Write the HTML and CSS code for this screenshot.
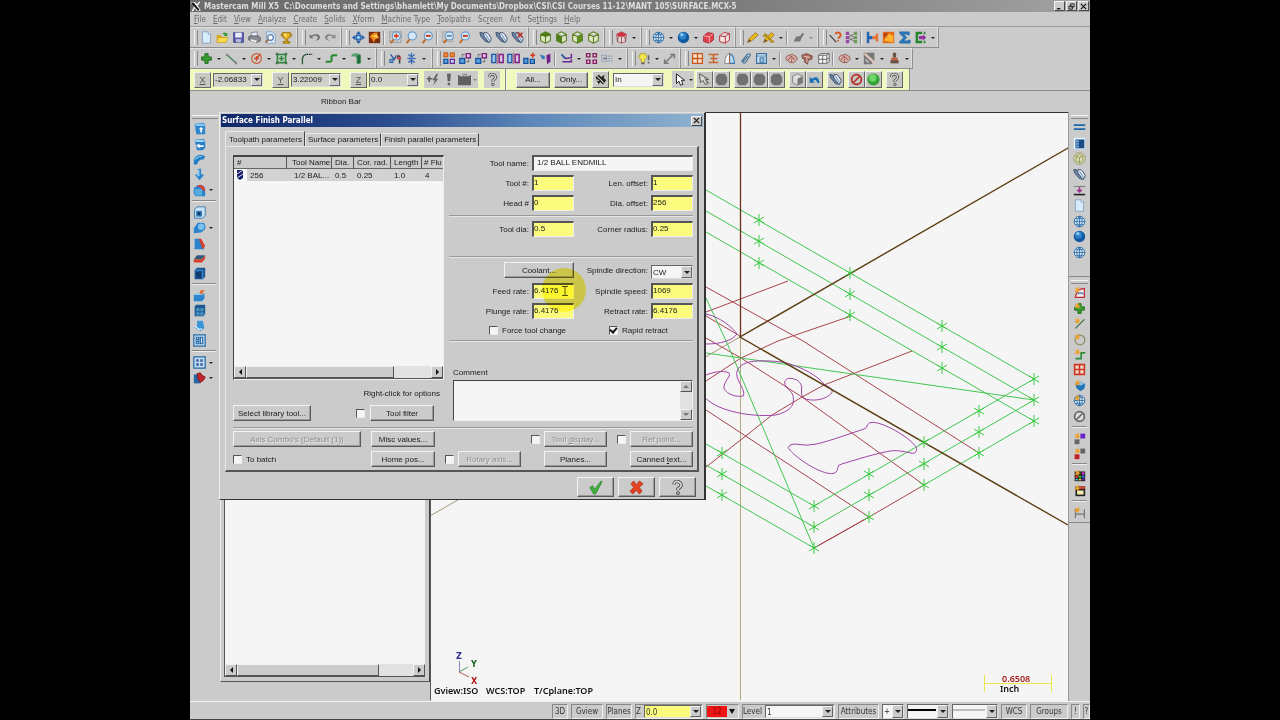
FILE: index.html
```html
<!DOCTYPE html>
<html lang="en">
<head>
<meta charset="utf-8">
<title>Mastercam Mill X5</title>
<link rel="stylesheet" href="styles.css">
</head>
<body>
<svg class="defs" aria-hidden="true">
<symbol id="new" viewBox="0 0 16 16"><path d="M3 1h7l3 3v11H3z" fill="#d9ecfb" stroke="#7d9cc0"/><path d="M10 1v3h3" fill="#fff" stroke="#7d9cc0"/></symbol>
<symbol id="open" viewBox="0 0 16 16"><path d="M1 5h5l1 2h6v7H1z" fill="#d9a818"/><path d="M3 8h12l-3 6H1z" fill="#f7dc4c" stroke="#b88f16" stroke-width=".6"/><path d="M7 4q3-4 6-1l1-1v4h-4l1-1q-2-2-4-1z" fill="#2f9a35"/></symbol>
<symbol id="save" viewBox="0 0 16 16"><path d="M2 2h12v12H2z" fill="#5d5fb5" stroke="#3a3c86"/><path d="M4 2h8v6H4z" fill="#e8ecf8"/><path d="M5 10h6v4H5z" fill="#b9bcd8"/></symbol>
<symbol id="print" viewBox="0 0 16 16"><path d="M4 2l7-1 1 6H4z" fill="#eef" stroke="#778"/><path d="M1 7l3-1h8l3 2v4l-4 2-10-3z" fill="#8a8d95" stroke="#444a55"/><path d="M4 10l7 2-1 2-7-2z" fill="#f4f4f4"/></symbol>
<symbol id="preview" viewBox="0 0 16 16"><path d="M3 1h7l4 3v11H3z" fill="#d6e8f8" stroke="#7d9cc0"/><circle cx="8" cy="8" r="3.5" fill="#f3faff" stroke="#567aa8" stroke-width="1.4"/><path d="M5.500 10.500L2 14" stroke="#a06030" stroke-width="2"/></symbol>
<symbol id="cup" viewBox="0 0 16 16"><path d="M3 2h10q0 7-4 8v3h3v2H4v-2h3v-3Q3 9 3 2z" fill="#e8b31c" stroke="#8d6408"/><path d="M5 3h3v5Q5 7 5 3z" fill="#ffe98a"/><path d="M3 4H1q0 3 3 4M13 4h2q0 3-3 4" fill="none" stroke="#a87c10"/></symbol>
<symbol id="undo" viewBox="0 0 16 16"><path d="M2 4v5h5L5 7q6-3 7 1 0 3-4 4 7 0 7-5Q13 1 4 5.500z" fill="#777"/></symbol>
<symbol id="redo" viewBox="0 0 16 16"><path d="M14 4v5H9l2-2Q5 4 4 8q0 3 4 4-7 0-7-5Q3 1 12 5.500z" fill="#888"/></symbol>
<symbol id="fit" viewBox="0 0 16 16"><path d="M8 0l3 4H5zM8 16l-3-4h6zM0 8l4-3v6zM16 8l-4 3V5z" fill="#1b5eaf"/><path d="M5 5h6v6H5z" fill="#49a0e0" stroke="#1b3e7f"/><path d="M7 7h2v2H7z" fill="#fff"/></symbol>
<symbol id="paint" viewBox="0 0 16 16"><path d="M1 1h14v14H1z" fill="#7a2c0e"/><path d="M2 7q4-6 10-5-2 3 2 6l-5 2-2 4q-1-4-5-7z" fill="#f08a1d"/><path d="M5 6l6-2 1 5z" fill="#ffd24a"/></symbol>
<symbol id="mag" viewBox="0 0 16 16"><path d="M6 10l-4 5" stroke="#c4702c" stroke-width="2.600"/><circle cx="9" cy="6" r="5" fill="#d5e8f7" stroke="#6f9bc8" stroke-width="1.500"/></symbol>
<symbol id="magplus" viewBox="0 0 16 16"><path d="M1 1h14v13H1z" fill="none" stroke="#777" stroke-dasharray="2 1"/><use href="#mag"/><path d="M9 3v6M6 6h6" stroke="#d2401f" stroke-width="2"/></symbol>
<symbol id="magdash" viewBox="0 0 16 16"><use href="#mag"/><path d="M6 6h6" stroke="#c23a24" stroke-width="2.400"/></symbol>
<symbol id="magwin" viewBox="0 0 16 16"><path d="M1 1h12v12H1z" fill="none" stroke="#888" stroke-dasharray="2 1"/><use href="#mag"/><path d="M6 6h6" stroke="#567aa0" stroke-width="2"/></symbol>
<symbol id="pen" viewBox="0 0 16 16"><path d="M1 2l3 0 7 8 2 4-5-1-6-7z" fill="#6d84a6" stroke="#2f4260"/><path d="M6 2q4-1 6 2l3 5q0 4-3 5L6 6z" fill="#e6edf6" stroke="#3c506e" stroke-width="1.200"/><path d="M8 4l5 8" stroke="#7a9cc8" stroke-width="1.500"/></symbol>
<symbol id="penx" viewBox="0 0 16 16"><use href="#pen"/><path d="M8 8l6-6M8 2l6 6" stroke="#c23322" stroke-width="1.800"/></symbol>
<symbol id="cube" viewBox="0 0 16 16"><path d="M8 1l6 3v8l-6 3-6-3V4zM2 4l6 3 6-3M8 7v8" fill="#dde7c5" stroke="#587d22" stroke-width="1.300"/></symbol>
<symbol id="cubet" viewBox="0 0 16 16"><use href="#cube"/><path d="M8 1l6 3-6 3-6-3z" fill="#4f7d18"/></symbol>
<symbol id="cubef" viewBox="0 0 16 16"><use href="#cube"/><path d="M2 4l6 3v8l-6-3z" fill="#4f7d18"/></symbol>
<symbol id="cuber" viewBox="0 0 16 16"><use href="#cube"/><path d="M14 4L8 7v8l6-3z" fill="#5f8c1c"/></symbol>
<symbol id="redcube" viewBox="0 0 16 16"><path d="M2 4l6-3 6 3-1 9-5 2-5-2z" fill="#f1d0d0" stroke="#a84850"/><path d="M2 4l6-3 6 3-2 3H4z" fill="#cc3844"/><path d="M8 7v8M4 7l-1 6M12 7l1 6" stroke="#555"/></symbol>
<symbol id="globe" viewBox="0 0 16 16"><circle cx="8" cy="8" r="6.500" fill="#d4e7f5" stroke="#2d6ba3" stroke-width="1.200"/><path d="M1.500 8h13M8 1.500v13M3 4.500h10M3 11.500h10M8 1.500Q1 8 8 14.500M8 1.500Q15 8 8 14.500" fill="none" stroke="#2d6ba3"/></symbol>
<symbol id="ball" viewBox="0 0 16 16"><circle cx="8" cy="8" r="7" fill="#12589f"/><circle cx="7" cy="6" r="4.500" fill="#2c82cc"/><circle cx="6" cy="4.500" r="2" fill="#8ecbf2"/></symbol>
<symbol id="shade" viewBox="0 0 16 16"><path d="M2 6l5-4 7 1v8l-5 4-7-2z" fill="#e0434c" stroke="#9d2028"/><path d="M2 6l7 1 5-4M9 7v8" fill="none" stroke="#ffc4c4"/></symbol>
<symbol id="wire" viewBox="0 0 16 16"><path d="M2 6l5-4 7 1v8l-5 4-7-2zM2 6l7 1 5-4M9 7v8" fill="#f7e4e4" stroke="#b83840" stroke-width="1.200"/></symbol>
<symbol id="pencil" viewBox="0 0 16 16"><path d="M2 14l2-5 8-7 3 3-8 7z" fill="#e6bd1d" stroke="#a07010"/><path d="M2 14l2-4 2 2z" fill="#543"/></symbol>
<symbol id="erase" viewBox="0 0 16 16"><use href="#pencil"/><path d="M3 3l10 10M1 6h5M10 13h5" stroke="#b48a12" stroke-width="2"/></symbol>
<symbol id="gray" viewBox="0 0 16 16"><path d="M2 13l3-6 5-1 3-4 2 2-3 4-2 5z" fill="#777"/></symbol>
<symbol id="ask" viewBox="0 0 16 16"><path d="M1 5l8 9" stroke="#444" stroke-width="1.500"/><path d="M8 4q1-3 4-2t2 4q-1 2-3 3" fill="none" stroke="#d65522" stroke-width="2.500"/><path d="M10 11h2v2h-2z" fill="#d65522"/></symbol>
<symbol id="nodes" viewBox="0 0 16 16"><path d="M4 4l8 4-8 4M12 3L4 8l8 5" fill="none" stroke="#666"/><path d="M1 1h4v4H1zM1 6h4v4H1zM1 11h4v4H1z" fill="#9a48a8"/><path d="M11 1h4v4h-4zM11 6h4v4h-4zM11 11h4v4h-4z" fill="#6e9a5a"/></symbol>
<symbol id="link" viewBox="0 0 16 16"><path d="M1 1h3v5h4v4H4v5H1z" fill="#2264b0"/><path d="M8 6h4V3h3v10h-3v-3H8z" fill="#e57332"/></symbol>
<symbol id="orange" viewBox="0 0 16 16"><path d="M1 1h14v14H1z" fill="#e36a14"/><path d="M2 12L9 3l5 3v8z" fill="#ffb22e"/><path d="M2 3l5-1-4 7z" fill="#b23c0d"/></symbol>
<symbol id="sigma" viewBox="0 0 16 16"><path d="M2 1h12v4h-2l-1-1H7l4 4-4 4h5l1-1h2v4H2v-2l5-5-5-5z" fill="#2978bd" stroke="#15508c" stroke-width=".5"/></symbol>
<symbol id="post" viewBox="0 0 16 16"><path d="M10 1H2v14h8v-3H5V4h5z" fill="#24852b"/><path d="M6 6h5V4l4 4-4 4v-2H6z" fill="#94339e"/><path d="M13 1v3M13 12v3" stroke="#24852b" stroke-width="2"/></symbol>
<symbol id="plus" viewBox="0 0 16 16"><path d="M6 2h4v4h4v4h-4v4H6v-4H2V6h4z" fill="#3a9b30" stroke="#176416"/></symbol>
<symbol id="line" viewBox="0 0 16 16"><path d="M2 3l11 10" stroke="#3d8256" stroke-width="1.600"/><path d="M1 2h3v3H1zM12 12h3v3h-3z" fill="#888"/></symbol>
<symbol id="circ" viewBox="0 0 16 16"><circle cx="8" cy="8" r="6" fill="none" stroke="#c9643f" stroke-width="1.500"/><path d="M8 5v6M5 8h6M9 7l4-5" stroke="#d34922" stroke-width="1.600"/></symbol>
<symbol id="rect" viewBox="0 0 16 16"><path d="M3 3h10v10H3z" fill="none" stroke="#2a8a38" stroke-width="2"/><path d="M8 5v6M5 8h6" stroke="#2a8a38" stroke-width="2"/><path d="M1 1h3v3H1zM12 1h3v3h-3zM1 12h3v3H1zM12 12h3v3h-3z" fill="#48764c"/></symbol>
<symbol id="fillet" viewBox="0 0 16 16"><path d="M3 15V9q0-5 5-6" fill="none" stroke="#2a5a38" stroke-width="1.600"/><path d="M8 3h7" stroke="#222" stroke-width="1.600" stroke-dasharray="2 1"/></symbol>
<symbol id="spline" viewBox="0 0 16 16"><path d="M1 12h5q3 0 2-4t3-4h4" fill="none" stroke="#258a2b" stroke-width="2.400"/></symbol>
<symbol id="solid" viewBox="0 0 16 16"><path d="M2 3q5-3 11 0v10q-2 3-5 1V7Q5 4 2 6z" fill="#56a06c"/><path d="M9 4h4v10H9z" fill="#1d6e3b"/></symbol>
<symbol id="trim" viewBox="0 0 16 16"><path d="M2 3l5 7M9 4l-3 6" stroke="#2a55a0" stroke-width="1.600"/><path d="M1 9h4v4H1z" fill="#69a6dc" stroke="#24508c"/><path d="M11 3l3 2v9h-2V8h-3z" fill="#444"/><path d="M10 6h5v3h-5z" fill="#c44a48"/></symbol>
<symbol id="brk" viewBox="0 0 16 16"><path d="M8 1v14M4 3l4 3 4-3M4 13l4-3 4 3M3 8h10" fill="none" stroke="#3c6db5" stroke-width="1.600"/></symbol>
<symbol id="xf" viewBox="0 0 16 16"><path d="M1 8h6v6H1z" fill="#5aa3df" stroke="#18529b" stroke-width="1.600"/><path d="M9 2h5v5H9z" fill="#e8d3ea" stroke="#7c2282" stroke-width="1.800"/><path d="M4 6V3h3M12 9v3H9" fill="none" stroke="#555"/></symbol>
<symbol id="xfr" viewBox="0 0 16 16"><path d="M1 1h5v5H1zM9 1h5v5H9z" fill="#f08a38" stroke="#b04810"/><path d="M1 9h5v5H1z" fill="#5aa3df" stroke="#18529b" stroke-width="1.500"/><path d="M9 9h5v5H9z" fill="#c5d9ee" stroke="#62249a" stroke-width="1.500"/></symbol>
<symbol id="mir" viewBox="0 0 16 16"><path d="M8 1v14" stroke="#b73248" stroke-dasharray="2 1"/><path d="M1 3h5v10H1z" fill="#9cc6ec" stroke="#18529b" stroke-width="1.600"/><path d="M10 3h5v10h-5z" fill="#d9c3e1" stroke="#7c2282" stroke-width="1.800"/></symbol>
<symbol id="xfp" viewBox="0 0 16 16"><path d="M1 8h5v6H1zM9 9h5v5H9z" fill="#5aa3df" stroke="#18529b" stroke-width="1.600"/><path d="M12 1v6M9 4h6" stroke="#d23b22" stroke-width="2"/></symbol>
<symbol id="wedge" viewBox="0 0 16 16"><path d="M1 3l6 2v4H4z" fill="#3878c0"/><path d="M9 4l5-2v10l-4 3z" fill="#72208a"/></symbol>
<symbol id="offs" viewBox="0 0 16 16"><path d="M2 3l5 5 7-1V2M3 12h11v-3" fill="none" stroke="#6a2390" stroke-width="1.800"/><path d="M2 3l4 5" stroke="#2a6ab0" stroke-width="2"/></symbol>
<symbol id="four" viewBox="0 0 16 16"><path d="M2 2h4v4H2zM10 2h4v4h-4zM2 10h4v4H2zM10 10h4v4h-4z" fill="#f0dbe8" stroke="#842061" stroke-width="1.800"/></symbol>
<symbol id="stretch" viewBox="0 0 16 16"><path d="M1 4h6v8H1zM9 5h5M9 8h6M9 11h5" fill="none" stroke="#7088a2" stroke-dasharray="2 1"/><path d="M3 7h4v2H3z" fill="#668"/></symbol>
<symbol id="bulb" viewBox="0 0 16 16"><path d="M3 2h6l2 4-3 4v3H4v-3L1 6z" fill="#f2e44d" stroke="#a89a25"/><path d="M12 4h2v6h-2zM12 12h2v2h-2zM4 13h4v2H4z" fill="#666"/></symbol>
<symbol id="dim" viewBox="0 0 16 16"><path d="M3 13l9-9M9 3h5v5M2 9v5h5" fill="none" stroke="#777" stroke-width="1.800"/></symbol>
<symbol id="grid" viewBox="0 0 16 16"><path d="M2 2h12v12H2zM8 1v14M1 8h14" fill="#f8e2c9" stroke="#c65a1e" stroke-width="1.600"/></symbol>
<symbol id="ladder" viewBox="0 0 16 16"><path d="M2 3h12M4 8h9M2 13h12M8 3v10" stroke="#c8632e" stroke-width="1.800"/></symbol>
<symbol id="arc" viewBox="0 0 16 16"><path d="M2 14Q3 2 8 2v12z" fill="#f1f5fa" stroke="#777"/><path d="M8 2q6 2 6 12H8z" fill="#b7d7ec" stroke="#3b7bb0" stroke-width="1.400"/><path d="M8 1v14" stroke="#c95b35"/></symbol>
<symbol id="clip" viewBox="0 0 16 16"><path d="M3 12l7-9q3-2 4 1l-6 9q-3 2-3-1l6-7" fill="none" stroke="#527a9c" stroke-width="1.600"/></symbol>
<symbol id="frame" viewBox="0 0 16 16"><path d="M2 2h12v12H2z" fill="#d5e8f6" stroke="#3a719e" stroke-width="1.500"/><path d="M2 5h12M6 7h5v6H6z" fill="#8bb5d8" stroke="#3a719e"/></symbol>
<symbol id="swirl" viewBox="0 0 16 16"><path d="M1 9q1-6 5-5 3-3 5 0 4 1 4 5l-4 4H6z" fill="#d8b2aa" stroke="#8a4a44"/><path d="M4 10q1-4 4-3t4 3M6 5q3 0 5 3M8 9v4" fill="none" stroke="#9a504a"/></symbol>
<symbol id="swirl2" viewBox="0 0 16 16"><path d="M1 4l6-2 7 3-1 4-4 1-1 5-4-3 1-3-3-1z" fill="#a9665c" stroke="#70413a"/><path d="M3 5l8 2M6 9l3-4M7 13l1-4" fill="none" stroke="#f0d5cf"/></symbol>
<symbol id="cells" viewBox="0 0 16 16"><path d="M2 4l3-2h10v10l-3 2H2zM2 4h10v10M12 4l3-2M2 9h10l3-2M7 4v10" fill="#f4f4f4" stroke="#555"/></symbol>
<symbol id="hatch" viewBox="0 0 16 16"><path d="M1 1h13v10l-4 4H1z" fill="#777"/><path d="M2 2l12 11" stroke="#e2c5bd" stroke-width="3"/><path d="M3 9l4 4" stroke="#bbb" stroke-width="2"/></symbol>
<symbol id="brush" viewBox="0 0 16 16"><path d="M6 1h4v6H6z" fill="#654"/><path d="M4 7h8v3H4z" fill="#c76042"/><path d="M3 10h10v4H3z" fill="#6a5040"/></symbol>
<symbol id="cursor" viewBox="0 0 16 16"><path d="M3 1v12l3-3 2 5 3-1-2-5h4z" fill="#fff" stroke="#222" stroke-width="1.200"/></symbol>
<symbol id="cursor2" viewBox="0 0 16 16"><path d="M2 1l1 11 3-3 3 5 3-1-3-5h4z" fill="#ddd" stroke="#555" stroke-width="1.200"/><path d="M5 2l9 11" stroke="#777"/></symbol>
<symbol id="chain" viewBox="0 0 16 16"><path d="M2 5l4-3 3 3 4-3-1 4 3 3-4 5-3-3-3 3z" fill="#222"/><path d="M4 4l8 8M2 12l3 1M3 8l3 2" stroke="#eee" stroke-width="1.300"/></symbol>
<symbol id="hex" viewBox="0 0 16 16"><path d="M4 1h8l3 4v6l-3 4H4l-3-4V5z" fill="#707070"/></symbol>
<symbol id="halfcube" viewBox="0 0 16 16"><path d="M8 1l6 3v8l-6 3-6-3V4z" fill="#ddd" stroke="#777"/><path d="M8 7l6-3v8l-6 3z" fill="#777"/></symbol>
<symbol id="back" viewBox="0 0 16 16"><path d="M2 5v7h7L6 10q4-4 6 3l2-1Q13 2 5 7z" fill="#1870b2"/></symbol>
<symbol id="ban" viewBox="0 0 16 16"><circle cx="8" cy="8" r="6" fill="none" stroke="#b82824" stroke-width="2"/><path d="M4 12l8-8" stroke="#b82824" stroke-width="2"/></symbol>
<symbol id="green" viewBox="0 0 16 16"><circle cx="8" cy="8" r="7.500" fill="#34a336"/><circle cx="7" cy="6" r="4.500" fill="#6fd668"/></symbol>
<symbol id="qm" viewBox="0 0 16 16"><path d="M4 5q1-4 4-3.500t4 3.500q0 2-3.500 4.500V11" fill="none" stroke="#4d4d4d" stroke-width="3.600"/><path d="M4 5q1-4 4-3.500t4 3.500q0 2-3.500 4.500V11" fill="none" stroke="#dcdcdc" stroke-width="1.600"/><circle cx="8.500" cy="14" r="1.600" fill="#bbb" stroke="#4d4d4d"/></symbol>
<symbol id="bolt" viewBox="0 0 16 16"><path d="M1 6h2V4h2v2h3v2H5v3H3V8H1zM13 1L8 9h3l-2 6 6-8h-3l3-6z" fill="#606060"/></symbol>
<symbol id="bang" viewBox="0 0 16 16"><path d="M6 1h5l-1 9H7zM7 12h3v3H7z" fill="#606060"/></symbol>
<symbol id="castle" viewBox="0 0 16 16"><path d="M0 2l3 2h10l3-2v13H0z" fill="#606060"/><path d="M5 1l2 2 1-2 2 2 1-2" fill="none" stroke="#666"/></symbol>
<symbol id="b1" viewBox="0 0 16 16"><path d="M2 2l11-1 2 3v11H4z" fill="#2d86cd"/><path d="M2 2h11l2 3H4z" fill="#8acbf3"/><path d="M9 13V9H7l3-3 3 3h-2v4z" fill="#fff"/></symbol>
<symbol id="b2" viewBox="0 0 16 16"><path d="M2 2l11-1 2 3v8l-3 3H5z" fill="#2b80c5"/><path d="M1 2h11l3 3H4z" fill="#9ed5f5"/><path d="M4 9l4-2v2h5v2H8v2z" fill="#fff"/></symbol>
<symbol id="b3" viewBox="0 0 16 16"><path d="M1 14V9q1-7 10-7l4 2-2 4q-6-1-8 6z" fill="#2280c8"/><path d="M3 8q2-4 8-4" fill="none" stroke="#93d2f5" stroke-width="1.500"/></symbol>
<symbol id="b4" viewBox="0 0 16 16"><path d="M6 1h4v7h4l-6 7-6-7h4z" fill="#2a83ca"/><path d="M6 2h2v8H5z" fill="#8fcbf0"/></symbol>
<symbol id="b5" viewBox="0 0 16 16"><path d="M1 5q4-4 9-4 5 2 5 6v8H3l-2-3z" fill="#2b85cf"/><path d="M5 2q9-3 10 7l-3-1Q11 4 5 3z" fill="#db3c2c"/><path d="M2 6h9v8H3z" fill="#58acdf"/></symbol>
<symbol id="b6" viewBox="0 0 16 16"><path d="M2 4l3-3h10v11l-3 3H2z" fill="#c7e3f5" stroke="#28699f"/><path d="M4 6h7v7H4z" fill="#2971b1"/><path d="M6 8h3v3H6z" fill="#12345c"/></symbol>
<symbol id="b7" viewBox="0 0 16 16"><path d="M1 9l5-7h7q3 2 2 8l-5 4-9 1z" fill="#2a84cb"/><circle cx="10" cy="7" r="4" fill="#7cc1ec"/></symbol>
<symbol id="b8" viewBox="0 0 16 16"><path d="M2 2h7l5 13H2z" fill="#2a84cb"/><path d="M7 2h3l5 9-3 4z" fill="#d93c2c"/></symbol>
<symbol id="b9" viewBox="0 0 16 16"><path d="M1 9l4-5h10l-4 5z" fill="#31597c"/><path d="M1 9h10l4-5v4l-4 5H1z" fill="#d2402c"/></symbol>
<symbol id="b10" viewBox="0 0 16 16"><path d="M2 4l3-3h10v11l-3 3H2z" fill="#1b5594"/><path d="M2 4h10v11" fill="none" stroke="#579bd5"/><path d="M4 6h6v7H4z" fill="#0f3b70"/></symbol>
<symbol id="b11" viewBox="0 0 16 16"><path d="M1 7h10l3-2v7l-3 3H1z" fill="#2b85cf"/><path d="M1 7l3-2h10l-3 2z" fill="#94d0f3"/><path d="M8 5l2-4 5 1-2 1-2 4z" fill="#e06b2d"/></symbol>
<symbol id="b12" viewBox="0 0 16 16"><path d="M2 3l2-2h11v11l-2 3H2z" fill="#1d5c92"/><path d="M4 5h4v4H4zM9 5h4v4H9zM4 10h4v4H4zM9 10h4v4H9z" fill="#4c8fc0"/></symbol>
<symbol id="b13" viewBox="0 0 16 16"><path d="M5 2h7l2 9-5 4-8-5 4-1z" fill="#3a97d8"/><path d="M2 9l6 4 3-1" fill="none" stroke="#e7f4fb" stroke-width="1.500"/></symbol>
<symbol id="b14" viewBox="0 0 16 16"><path d="M1 1h14v14H1z" fill="#c8e2f4" stroke="#276aa3" stroke-width="1.500"/><path d="M4 4h3v3H4zM9 4h3v8H9zM4 9h3v3H4z" fill="none" stroke="#276aa3" stroke-width="1.500"/></symbol>
<symbol id="b15" viewBox="0 0 16 16"><path d="M1 1h14v14H1z" fill="#bfdcf1" stroke="#276aa3" stroke-width="1.500"/><path d="M4 4h3v3H4zM9 4h3v3H9zM4 9h3v3H4zM9 9h3v3H9z" fill="#3d5ca0"/></symbol>
<symbol id="b16" viewBox="0 0 16 16"><path d="M1 3h8v11H1z" fill="#2466a6"/><path d="M5 2l4-1 2 3 4 2-2 4-4 3-3-5z" fill="#c2252c" stroke="#7d1218"/></symbol>
<symbol id="eq" viewBox="0 0 16 16"><path d="M1 5h14M1 10h14" stroke="#1c66ad" stroke-width="2"/></symbol>
<symbol id="pane" viewBox="0 0 16 16"><path d="M0 0h16v16H0z" fill="#f2f7fb" stroke="#8aa0b5"/><path d="M3 3h11v11H3z" fill="#174c84"/><path d="M4 4h3v9H4z" fill="#79b7e3"/><path d="M4 7h3M4 10h3" stroke="#174c84"/></symbol>
<symbol id="wcube" viewBox="0 0 16 16"><circle cx="8" cy="8" r="7" fill="#dfe0b5" stroke="#85894e"/><path d="M4 5l4-2 4 2v6l-4 2-4-2zM4 5l4 2 4-2M8 7v6" fill="none" stroke="#85894e"/></symbol>
<symbol id="zset" viewBox="0 0 16 16"><path d="M1 3h14" stroke="#666"/><path d="M1 13h14" stroke="#222" stroke-width="2"/><path d="M7 4h2v3h3l-4 4-4-4h3z" fill="#9a2c8d"/></symbol>
<symbol id="spark" viewBox="0 0 16 16"><path d="M1 7l3-2-2-3 3 1 2-3v4l3 1-3 1v3L5 7z" fill="#eda12d"/></symbol>
<symbol id="rsplit" viewBox="0 0 16 16"><path d="M3 13q3-9 6-9l5-1v11H3z" fill="#eee" stroke="#c02f3a" stroke-width="1.600"/><path d="M6 10q3-3 7 0" fill="none" stroke="#356ca8" stroke-width="1.500"/><use href="#spark"/></symbol>
<symbol id="splus" viewBox="0 0 16 16"><use href="#plus"/><use href="#spark"/></symbol>
<symbol id="sline" viewBox="0 0 16 16"><path d="M3 14L14 3" stroke="#3e6e4a" stroke-width="1.500"/><use href="#spark"/></symbol>
<symbol id="scirc" viewBox="0 0 16 16"><circle cx="8.500" cy="8.500" r="6" fill="none" stroke="#888d62" stroke-width="1.500"/><use href="#spark"/></symbol>
<symbol id="sspl" viewBox="0 0 16 16"><path d="M3 13h7V6h5" fill="none" stroke="#2a8a38" stroke-width="2"/><use href="#spark"/></symbol>
<symbol id="rgrid" viewBox="0 0 16 16"><path d="M2 2h12v12H2zM8 1v14M1 8h14" fill="#f3dcc5" stroke="#cf3623" stroke-width="2"/></symbol>
<symbol id="sblue" viewBox="0 0 16 16"><path d="M3 5l6-2 6 3-1 6-5 3-5-4z" fill="#2374b8"/><path d="M4 5l5 3 5-2-5-3z" fill="#89c6ea"/><use href="#spark"/></symbol>
<symbol id="sglobe" viewBox="0 0 16 16"><use href="#globe"/><use href="#spark"/></symbol>
<symbol id="none" viewBox="0 0 16 16"><circle cx="8" cy="8" r="6" fill="#ddd" stroke="#666" stroke-width="2"/><path d="M4 12l8-8" stroke="#666" stroke-width="2"/></symbol>
<symbol id="pur" viewBox="0 0 16 16"><path d="M9 2h6v6H9z" fill="#6a24cc"/><path d="M2 9h6v6H2z" fill="#666"/><use href="#spark"/></symbol>
<symbol id="rdg" viewBox="0 0 16 16"><path d="M9 2h6v6H9z" fill="#666"/><path d="M2 9h6v6H2z" fill="#c3202c"/><use href="#spark"/></symbol>
<symbol id="pal" viewBox="0 0 16 16"><path d="M2 3h13v12H2z" fill="#222"/><path d="M3 8h3v3H3z" fill="#d33"/><path d="M7 8h3v3H7z" fill="#3a3"/><path d="M11 8h3v3h-3z" fill="#36d"/><path d="M11 4h3v3h-3z" fill="#c3c"/><path d="M3 12h3v2H3z" fill="#3bc"/><path d="M7 12h3v2H7z" fill="#dd3"/><path d="M11 12h3v2h-3z" fill="#72c"/><use href="#spark"/></symbol>
<symbol id="win" viewBox="0 0 16 16"><path d="M3 3h12v12H3z" fill="#222"/><path d="M5 8h8v5H5z" fill="#f3e9a8"/><path d="M8 3h7v3H8z" fill="#d3442e"/><use href="#spark"/></symbol>
<symbol id="sdim" viewBox="0 0 16 16"><path d="M3 4v11M14 4v11M3 10h11" stroke="#777" stroke-width="1.500"/><use href="#spark"/></symbol>
<symbol id="star" viewBox="0 0 12 12" overflow="visible"><path d="M6 0v12M1 3l10 6M1 9l10-6" fill="none" stroke="#3ecb46"/></symbol>
</svg>

<div class="app">
<header class="title">
<svg class="logo" viewBox="0 0 12 12"><path d="M1 2h4l2 3 3-4M7 5l3 5H7L5 6l-3 5" fill="none" stroke="#fff" stroke-width="1.500"/><path d="M2 2l7 8" stroke="#111" stroke-width="2"/></svg>
<h1>Mastercam Mill X5&nbsp; C:\Documents and Settings\bhamlett\My Documents\Dropbox\CSI\CSI Courses 11-12\MANT 105\SURFACE.MCX-5</h1>
<div class="winbtns">
<button class="wb" aria-label="Minimize"><svg viewBox="0 0 8 8"><path d="M1 6.500h4" stroke="#111" stroke-width="1.500"/></svg></button>
<button class="wb" aria-label="Restore"><svg viewBox="0 0 8 8"><path d="M3 1h4v3.500H3zM1 3.500h4V7H1z" fill="#ccc" stroke="#111"/></svg></button>
<button class="wb" aria-label="Close"><svg viewBox="0 0 8 8"><path d="M1 1l6 6M7 1L1 7" stroke="#111" stroke-width="1.300"/></svg></button>
</div>
</header>
<nav class="menu">
<a href="#"><u>F</u>ile</a><a href="#"><u>E</u>dit</a><a href="#"><u>V</u>iew</a><a href="#"><u>A</u>nalyze</a><a href="#"><u>C</u>reate</a><a href="#"><u>S</u>olids</a><a href="#"><u>X</u>form</a><a href="#"><u>M</u>achine Type</a><a href="#"><u>T</u>oolpaths</a><a href="#">Sc<u>r</u>een</a><a href="#">Art</a><a href="#">Se<u>t</u>tings</a><a href="#"><u>H</u>elp</a>
</nav>

<div class="bar">
<div class="grp"><button class="t"><svg><use href="#new"/></svg></button><button class="t"><svg><use href="#open"/></svg></button><button class="t"><svg><use href="#save"/></svg></button><button class="t"><svg><use href="#print"/></svg></button><button class="t"><svg><use href="#preview"/></svg></button><button class="t"><svg><use href="#cup"/></svg></button></div>
<div class="grp"><button class="t"><svg><use href="#undo"/></svg></button><button class="t"><svg><use href="#redo"/></svg></button></div>
<div class="grp"><button class="t"><svg><use href="#fit"/></svg></button><button class="t"><svg><use href="#paint"/></svg></button><i class="sep"></i><button class="t"><svg><use href="#magplus"/></svg></button><button class="t"><svg><use href="#mag"/></svg></button><button class="t"><svg><use href="#magdash"/></svg></button><i class="sep"></i><button class="t"><svg><use href="#magwin"/></svg></button><button class="t"><svg><use href="#magdash"/></svg></button><i class="space"></i><button class="t"><svg><use href="#pen"/></svg></button><button class="t"><svg><use href="#pen"/></svg></button><button class="t"><svg><use href="#penx"/></svg></button></div>
<div class="grp"><button class="t"><svg><use href="#cubet"/></svg></button><button class="t"><svg><use href="#cubef"/></svg></button><button class="t"><svg><use href="#cuber"/></svg></button><button class="t"><svg><use href="#cube"/></svg></button></div>
<div class="grp"><button class="t"><svg><use href="#redcube"/></svg></button><i class="dd"></i></div>
<div class="grp"><button class="t"><svg><use href="#globe"/></svg></button><i class="dd"></i><button class="t"><svg><use href="#ball"/></svg></button><i class="dd"></i><button class="t"><svg><use href="#shade"/></svg></button><button class="t"><svg><use href="#wire"/></svg></button></div>
<div class="grp"><button class="t"><svg><use href="#pencil"/></svg></button><button class="t"><svg><use href="#erase"/></svg></button><i class="dd"></i><i class="sep"></i><button class="t"><svg><use href="#gray"/></svg></button><i class="dd off"></i></div>
<div class="grp last"><button class="t"><svg><use href="#ask"/></svg></button><button class="t"><svg><use href="#nodes"/></svg></button><i class="sep"></i><button class="t"><svg><use href="#link"/></svg></button><button class="t"><svg><use href="#orange"/></svg></button><button class="t"><svg><use href="#sigma"/></svg></button><button class="t"><svg><use href="#post"/></svg></button><i class="dd"></i></div>
</div>

<div class="bar">
<div class="grp"><button class="t"><svg><use href="#plus"/></svg></button><i class="dd"></i><button class="t"><svg><use href="#line"/></svg></button><i class="dd"></i><button class="t"><svg><use href="#circ"/></svg></button><i class="dd"></i><button class="t"><svg><use href="#rect"/></svg></button><i class="dd"></i><button class="t"><svg><use href="#fillet"/></svg></button><i class="dd"></i><button class="t"><svg><use href="#spline"/></svg></button><i class="dd"></i><button class="t"><svg><use href="#solid"/></svg></button><i class="dd"></i></div>
<div class="grp wide"><button class="t"><svg><use href="#trim"/></svg></button><button class="t"><svg><use href="#brk"/></svg></button><i class="dd"></i></div>
<div class="grp"><button class="t"><svg><use href="#xfr"/></svg></button><button class="t"><svg><use href="#xf"/></svg></button><button class="t"><svg><use href="#xf"/></svg></button><button class="t"><svg><use href="#mir"/></svg></button><button class="t"><svg><use href="#mir"/></svg></button><button class="t"><svg><use href="#xfp"/></svg></button><button class="t"><svg><use href="#wedge"/></svg></button><i class="sep"></i><button class="t"><svg><use href="#offs"/></svg></button><i class="dd"></i><button class="t"><svg><use href="#four"/></svg></button><button class="t"><svg><use href="#stretch"/></svg></button><i class="dd"></i></div>
<div class="grp"><button class="t"><svg><use href="#bulb"/></svg></button><i class="dd"></i><button class="t"><svg><use href="#dim"/></svg></button></div>
<div class="grp last"><button class="t"><svg><use href="#grid"/></svg></button><button class="t"><svg><use href="#ladder"/></svg></button><button class="t"><svg><use href="#arc"/></svg></button><button class="t"><svg><use href="#clip"/></svg></button><button class="t"><svg><use href="#frame"/></svg></button><i class="dd"></i><i class="sep"></i><button class="t"><svg><use href="#swirl"/></svg></button><button class="t"><svg><use href="#swirl2"/></svg></button><button class="t"><svg><use href="#cells"/></svg></button><i class="sep"></i><button class="t"><svg><use href="#swirl"/></svg></button><i class="dd"></i><button class="t"><svg><use href="#hatch"/></svg></button><i class="dd"></i><button class="t"><svg><use href="#brush"/></svg></button><i class="dd"></i></div>
</div>

<div class="bar coords">
<div class="pack">
<label class="axis" for="cx">X</label><span class="combo"><select id="cx"><option>-2.06833</option></select><i class="drop"></i></span>
<label class="axis" for="cy">Y</label><span class="combo"><select id="cy"><option>3.22009</option></select><i class="drop"></i></span>
<label class="axis" for="cz">Z</label><span class="combo near"><select id="cz"><option>0.0</option></select><i class="drop"></i></span>
<span class="plate"><button class="t"><svg><use href="#bolt"/></svg></button><button class="t"><svg><use href="#bang"/></svg></button><button class="t"><svg><use href="#castle"/></svg></button><i class="dd off"></i></span>
<span class="plate"><button class="t"><svg><use href="#qm"/></svg></button></span>
</div>
<div class="pack two">
<button class="push w34">All...</button><button class="push w34">Only...</button><button class="r"><svg><use href="#chain"/></svg></button>
<span class="combo lite"><select aria-label="Selection"><option>In</option></select><i class="drop"></i></span>
<span class="plate arrow"><button class="t"><svg><use href="#cursor"/></svg></button><i class="dd"></i></span>
<span class="run"><button class="r"><svg><use href="#cursor2"/></svg></button><button class="r"><svg><use href="#hex"/></svg></button></span>
<span class="run"><button class="r"><svg><use href="#hex"/></svg></button><button class="r"><svg><use href="#hex"/></svg></button><button class="r"><svg><use href="#hex"/></svg></button></span>
<span class="run"><button class="r"><svg><use href="#halfcube"/></svg></button><button class="r"><svg><use href="#back"/></svg></button></span>
<button class="r"><svg><use href="#pen"/></svg></button>
<span class="run"><button class="r"><svg><use href="#ban"/></svg></button><button class="r"><svg><use href="#green"/></svg></button></span>
<button class="r"><svg><use href="#qm"/></svg></button>
</div>
</div>
<div class="ribbon">Ribbon Bar</div>

<main class="work">
<aside class="rail left">
<div class="vg g5"><button class="v"><svg><use href="#b1"/></svg></button><button class="v"><svg><use href="#b2"/></svg></button><button class="v"><svg><use href="#b3"/></svg></button><button class="v"><svg><use href="#b4"/></svg></button><button class="v more"><svg><use href="#b5"/></svg></button></div>
<div class="vg g5"><button class="v"><svg><use href="#b6"/></svg></button><button class="v more"><svg><use href="#b7"/></svg></button><button class="v"><svg><use href="#b8"/></svg></button><button class="v"><svg><use href="#b9"/></svg></button><button class="v"><svg><use href="#b10"/></svg></button></div>
<div class="vg g4"><button class="v"><svg><use href="#b11"/></svg></button><button class="v"><svg><use href="#b12"/></svg></button><button class="v"><svg><use href="#b13"/></svg></button><button class="v"><svg><use href="#b14"/></svg></button></div>
<div class="vg g2"><button class="v more"><svg><use href="#b15"/></svg></button><button class="v more"><svg><use href="#b16"/></svg></button></div>
</aside>
<section class="manager"><div class="tree"></div><div class="sb"><button class="sbb l" aria-label="Left"></button><i class="thumb"></i><button class="sbb rt" aria-label="Right"></button></div></section>

<section class="view">
<svg viewBox="431 113 637 587" preserveAspectRatio="xMidYMid slice" fill="none">
<path d="M430 516L740 337" stroke="#a59877"/>
<path d="M740.500 336V701" stroke="#b4ab7c"/>
<g stroke="#a8444c">
<path d="M706 287L803 341L979 453M706 338L741 358L802 397L924 485M706 410L869 517L814 548L869 517L924 485M706 312L788 281M706 381L741 358L778 341L851 316M706 467L747 435L772 415L802 397L824 385L912 351M706 316L740 336"/>
</g>
<g stroke="#42c651">
<path d="M706 190L1034 379L814 506L706 444M706 211L1034 400L814 527L706 465M706 232L1034 421L924 485M814 548L706 486M706 298L727 343L814 548M706 353L1034 400"/>
</g>
<g stroke="#a044a6">
<path d="M706 314C720 317 732 327 737 334C732 341 720 344 706 344"/>
<path transform="translate(700 340) scale(.3333)" vector-effect="non-scaling-stroke" d="M18 105C50 92 80 92 88 100C92 112 70 125 72 145C80 165 115 172 130 168C138 150 110 125 110 100C112 80 130 68 160 64C200 60 250 65 270 72C310 85 350 105 375 135C400 145 400 155 392 162C380 175 350 185 320 178C300 170 305 160 305 140C300 118 280 115 265 115C250 120 252 135 262 145C275 155 282 165 280 185C280 205 250 222 220 226C150 230 60 215 18 176"/>
<path transform="translate(700 340) scale(.3333)" vector-effect="non-scaling-stroke" d="M265 322Q270 308 300 314Q320 318 350 312C400 300 450 280 490 268Q502 265 502 255Q507 246 520 247C560 250 640 300 650 325Q650 340 638 340C610 335 590 328 560 335C500 348 460 362 425 372Q413 374 413 385Q412 400 395 401C350 400 270 340 265 322Z"/>
</g>
<path d="M740.500 112V337" stroke="#6e3018" stroke-width="1.300"/>
<path d="M1068 148L740 337L1068 525" stroke="#5c3d12" stroke-width="1.400"/>
<g class="stars">
<use href="#star" x="753" y="214" width="12" height="12"/><use href="#star" x="753" y="235" width="12" height="12"/><use href="#star" x="753" y="257" width="12" height="12"/>
<use href="#star" x="844" y="267" width="12" height="12"/><use href="#star" x="844" y="288" width="12" height="12"/><use href="#star" x="844" y="309" width="12" height="12"/>
<use href="#star" x="936" y="320" width="12" height="12"/><use href="#star" x="936" y="341" width="12" height="12"/><use href="#star" x="936" y="362" width="12" height="12"/>
<use href="#star" x="1028" y="373" width="12" height="12"/><use href="#star" x="1028" y="394" width="12" height="12"/><use href="#star" x="1028" y="415" width="12" height="12"/>
<use href="#star" x="973" y="405" width="12" height="12"/><use href="#star" x="973" y="426" width="12" height="12"/><use href="#star" x="973" y="447" width="12" height="12"/>
<use href="#star" x="918" y="436" width="12" height="12"/><use href="#star" x="918" y="458" width="12" height="12"/><use href="#star" x="918" y="479" width="12" height="12"/>
<use href="#star" x="863" y="468" width="12" height="12"/><use href="#star" x="863" y="489" width="12" height="12"/><use href="#star" x="863" y="511" width="12" height="12"/>
<use href="#star" x="808" y="500" width="12" height="12"/><use href="#star" x="808" y="521" width="12" height="12"/><use href="#star" x="808" y="542" width="12" height="12"/>
<use href="#star" x="716" y="447" width="12" height="12"/><use href="#star" x="716" y="468" width="12" height="12"/><use href="#star" x="716" y="489" width="12" height="12"/>
</g>
<path d="M459.500 661v11" stroke="#8288c8"/><path d="M459 672l9-5" stroke="#5a9a60"/><path d="M459 672l10 5" stroke="#b06055"/>
<g class="gt"><text x="456" y="659" fill="#2c2c8c">Z</text><text x="471" y="667" fill="#11661c">Y</text><text x="471" y="684" fill="#b01818">X</text></g>
<path d="M984.500 675v17M1051.500 675v17M984 683.500h67" stroke="#e8e84a"/>
<text class="gs" x="1002" y="682" fill="#a81c1c">0.6508</text>
<g class="gs" fill="#111"><text x="1000" y="692">Inch</text><text x="434" y="694">Gview:ISO</text><text x="486" y="694">WCS:TOP</text><text x="534" y="694">T/Cplane:TOP</text></g>
</svg>
</section>

<aside class="rail right">
<div class="vg g9"><button class="v"><svg><use href="#eq"/></svg></button><button class="v"><svg><use href="#pane"/></svg></button><button class="v"><svg><use href="#wcube"/></svg></button><button class="v"><svg><use href="#pen"/></svg></button><button class="v"><svg><use href="#zset"/></svg></button><button class="v"><svg><use href="#new"/></svg></button><button class="v"><svg><use href="#globe"/></svg></button><button class="v"><svg><use href="#ball"/></svg></button><button class="v"><svg><use href="#globe"/></svg></button></div>
<div class="rail2">
<div class="vg g9b"><button class="v"><svg><use href="#rsplit"/></svg></button><button class="v"><svg><use href="#splus"/></svg></button><button class="v"><svg><use href="#sline"/></svg></button><button class="v"><svg><use href="#scirc"/></svg></button><button class="v"><svg><use href="#sspl"/></svg></button><button class="v"><svg><use href="#rgrid"/></svg></button><button class="v"><svg><use href="#sblue"/></svg></button><button class="v"><svg><use href="#sglobe"/></svg></button><button class="v"><svg><use href="#none"/></svg></button></div>
<div class="vg g2"><button class="v"><svg><use href="#pur"/></svg></button><button class="v"><svg><use href="#rdg"/></svg></button></div>
<div class="vg g2"><button class="v"><svg><use href="#pal"/></svg></button><button class="v"><svg><use href="#win"/></svg></button></div>
<div class="vg g1"><button class="v"><svg><use href="#sdim"/></svg></button></div>
</div>
</aside>

<form class="dialog">
<div class="dtitle"><h2>Surface Finish Parallel</h2><button type="button" class="wb" aria-label="Close dialog"><svg viewBox="0 0 8 8"><path d="M1 1l6 6M7 1L1 7" stroke="#111" stroke-width="1.300"/></svg></button></div>
<div class="tabs"><button type="button" class="tab on">Toolpath parameters</button><button type="button" class="tab">Surface parameters</button><button type="button" class="tab">Finish parallel parameters</button></div>
<div class="page">
<div class="cols">
<div class="lcol">
<div class="list">
<table><colgroup><col class="c1"><col class="c2"><col class="c3"><col class="c4"><col class="c5"><col></colgroup>
<thead><tr><th>#</th><th>Tool Name</th><th>Dia.</th><th>Cor. rad.</th><th>Length</th><th># Flu</th></tr></thead>
<tbody><tr><td><span class="tooln"><svg viewBox="0 0 6 10"><path d="M0 0h6v8l-3 2-3-2z" fill="#151e66"/><path d="M0 4l6-4M0 8l6-4" stroke="#dde"/></svg>256</span></td><td>1/2 BAL...</td><td>0.5</td><td>0.25</td><td>1.0</td><td>4</td></tr></tbody></table>
<div class="sb"><button type="button" class="sbb l" aria-label="Left"></button><i class="thumb"></i><button type="button" class="sbb rt" aria-label="Right"></button></div>
</div>
<p class="hint">Right-click for options</p>
<div class="lib"><button type="button" class="push w78">Select library tool...</button><input type="checkbox" aria-label="Use tool filter"><button type="button" class="push w64">Tool filter</button></div>
</div>
<div class="rcol">
<div class="fields">
<label for="tn">Tool name:</label><input id="tn" class="white" value="1/2 BALL ENDMILL">
<label for="t1">Tool #:</label><input id="t1" value="1"><label for="t2">Len. offset:</label><input id="t2" value="1">
<label for="t3">Head #</label><input id="t3" value="0"><label for="t4">Dia. offset:</label><input id="t4" value="256">
</div>
<div class="fields mid">
<label for="t5">Tool dia:</label><input id="t5" value="0.5"><label for="t6">Corner radius:</label><input id="t6" value="0.25">
</div>
<div class="fields low">
<button type="button" class="push cool">Coolant...</button><label for="sd">Spindle direction:</label><span class="combo lite cw"><select id="sd"><option>CW</option></select><i class="drop"></i></span>
<label for="t7">Feed rate:</label><input id="t7" value="6.4176"><label for="t8">Spindle speed:</label><input id="t8" value="1069">
<label for="t9">Plunge rate:</label><input id="t9" value="6.4176"><label for="t10">Retract rate:</label><input id="t10" value="6.4176">
<div class="checks"><label class="ck"><input type="checkbox">Force tool change</label><label class="ck"><input type="checkbox" checked>Rapid retract</label></div>
</div>
<div class="comment"><label for="cm">Comment</label><div class="ta"><textarea id="cm"></textarea><div class="vsb"><button type="button" class="sbb up" aria-label="Up"></button><button type="button" class="sbb dn" aria-label="Down"></button></div></div></div>
</div>
</div>
<div class="foot">
<button type="button" class="push" disabled>Axis Combo's (Default (1))</button><button type="button" class="push">Misc values...</button><span></span>
<span class="opt"><input type="checkbox" aria-label="Use tool display"><button type="button" class="push" disabled>Tool <u>d</u>isplay...</button></span><span class="opt"><input type="checkbox" aria-label="Use ref point"><button type="button" class="push" disabled>Ref point...</button></span>
<label class="ck"><input type="checkbox">To batch</label><button type="button" class="push">Home pos...</button>
<span class="opt"><input type="checkbox" aria-label="Use rotary axis"><button type="button" class="push" disabled>Rotary axis...</button></span><span class="opt end"><button type="button" class="push">Planes...</button></span><span class="opt end"><button type="button" class="push">Canned <u>t</u>ext...</button></span>
</div>
</div>
<div class="actions">
<button type="button" class="push big" aria-label="OK"><svg viewBox="0 0 16 16"><path d="M2 8l3-2 2 4 7-9 1 1-7 13H6z" fill="#3eb53a" stroke="#1c7a1c" stroke-width=".7"/></svg></button>
<button type="button" class="push big" aria-label="Cancel"><svg viewBox="0 0 16 16"><path d="M2 4l3-3 3 4 3-4 4 3-4 4 3 4-3 3-3-4-4 4-3-3 4-4z" fill="#e34322" stroke="#a02312" stroke-width=".7"/></svg></button>
<button type="button" class="push big" aria-label="Help"><svg><use href="#qm"/></svg></button>
</div>
<i class="halo"></i>
<svg class="caret" viewBox="0 0 6 10"><path d="M0 .500h6M0 9.500h6M3 0v10" stroke="#554f10"/></svg>
</form>
</main>

<footer class="status">
<button class="cell w16">3D</button><button class="cell w32">Gview</button><button class="cell w26">Planes</button>
<span class="cell zc"><label for="sz">Z</label><span class="combo yel"><select id="sz"><option>0.0</option></select><i class="drop"></i></span></span>
<button class="cell colr"><b>12</b><i class="tri"></i></button>
<span class="cell lv"><label for="sl">Level</label><span class="combo lite"><select id="sl"><option>1</option></select><i class="drop"></i></span></span>
<button class="cell w41">Attributes</button>
<span class="combo lite s22"><select aria-label="Point style"><option>+</option></select><i class="drop"></i></span>
<span class="combo lite s42"><svg viewBox="0 0 28 10" preserveAspectRatio="none"><path d="M0 5h28" stroke="#000" stroke-width="2"/></svg><select aria-label="Line style"><option></option></select><i class="drop"></i></span>
<span class="combo lite s46"><svg viewBox="0 0 28 10" preserveAspectRatio="none"><path d="M0 5h28" stroke="#888"/></svg><select aria-label="Line width"><option></option></select><i class="drop"></i></span>
<button class="cell w26">WCS</button><button class="cell w38">Groups</button><button class="cell w9">!</button><button class="cell w7">?</button>
</footer>
</div>
</body>
</html>
```
FILE: styles.css
```css
* { box-sizing: border-box; }
:root { --face: #cbcbcb; --paper: #f5f5f5; --lo: #7c7c7c; --dk: #4a4a4a; --hi: #f2f2f2; --yel: #fbfb7e; }
body { margin: 0; background: #000; padding: 0 190px; font: 8px/11px "Liberation Sans", Arial, sans-serif; color: #1a1a1a; }
button, input, select, textarea { font: inherit; color: inherit; margin: 0; padding: 0; border: 0; border-radius: 0; background: none; }
h1, h2, p { margin: 0; font: inherit; }
.defs { position: absolute; width: 0; height: 0; }
.app { display: flex; flex-direction: column; height: 100vh; min-width: 900px; background: var(--face); border-bottom: 1px solid #444; overflow: hidden; }

.title { display: flex; align-items: center; height: 12px; background: linear-gradient(90deg, #6c6c6c, #7c7c7c 60%, #a2a2a2); color: #dedede; padding-right: 1px; }
.title h1 { flex: 1; font: bold 8px/11px "DejaVu Sans Condensed", "DejaVu Sans", sans-serif; white-space: nowrap; }
.logo { width: 12px; height: 11px; margin-right: 2px; }
.winbtns { display: flex; gap: 1px; }
.wb { width: 11px; height: 10px; display: grid; place-items: center; background: var(--face); border: 1px solid; border-color: var(--hi) var(--dk) var(--dk) var(--hi); }
.wb svg { width: 7px; height: 7px; }

.menu { display: flex; gap: 7px; height: 15px; padding: 1px 0 0 4px; align-items: center; border-bottom: 1px solid #999; font: 8px/14px "DejaVu Sans Condensed", "DejaVu Sans", sans-serif; }
.menu a { color: #6c6c6c; text-decoration: none; white-space: nowrap; }

.bar { display: flex; height: 21px; flex: none; }
.grp { display: flex; align-items: center; position: relative; padding: 0 3px 0 8px; border-right: 1px solid #909090; border-bottom: 1px solid #8d8d8d; border-top: 1px solid #e4e4e4; box-shadow: inset -1px 0 #e0e0e0; }
.grp.wide { padding: 0 4px 0 10px; }
.grp.last { padding-right: 1px; }
.grp::before { content: ""; position: absolute; left: 4px; top: 2px; bottom: 2px; width: 2px; border-left: 1px solid var(--hi); border-right: 1px solid #888; }
.t { width: 16px; height: 16px; display: grid; place-items: center; }
.t svg { width: 13px; height: 13px; }
.dd { width: 9px; display: grid; place-items: center; }
.dd::after { content: ""; border: 2px solid transparent; border-top-color: #222; border-bottom: 0; }
.dd.off::after { border-top-color: #888; }
.sep, .space { width: 5px; height: 14px; }
.sep { background: linear-gradient(90deg, transparent 1px, #909090 1px, #909090 2px, #eee 2px, #eee 3px, transparent 3px); }

.coords { height: 22px; border-bottom: 1px solid #8d8d8d; font: 8px/10px "Liberation Sans", sans-serif; }
.pack { display: flex; align-items: center; background: #f1f8be; padding: 0 5px 0 4px; border-right: 1px solid #888; }
.pack.two { padding: 0 6px 0 9px; border-left: 1px solid var(--hi); gap: 4px; }
.axis { width: 17px; height: 16px; display: grid; place-items: center; text-decoration: underline; background: #c8c8c0; border: 1px solid; border-color: var(--hi) #666 #666 var(--hi); margin-right: 2px; font-size: 9px; color: #555; }
.combo { display: flex; height: 14px; border: 1px solid; border-color: #666 #ddd #ddd #666; background: #d0d0c8; position: relative; }
.pack > .combo { width: 50px; margin-right: 9px; }
.pack > .combo.near { margin-right: 5px; }
.pack > .axis ~ .plate { margin-right: 6px; }
.pack > .axis ~ .plate:last-child { margin-right: 0; }
.pack.two > .combo { width: 51px; margin-right: 4px; }
.combo select { flex: 1; min-width: 0; appearance: none; padding-left: 1px; }
.combo.lite { background: var(--paper); }
.combo.yel { background: var(--yel); }
.drop { width: 11px; flex: none; display: grid; place-items: center; background: var(--face); border: 1px solid; border-color: var(--hi) #666 #666 var(--hi); pointer-events: none; }
.drop::after { content: ""; border: 3px solid transparent; border-top-color: #222; border-bottom: 0; }
.plate { display: flex; align-items: center; background: var(--face); height: 17px; }
.plate .dd { width: 6px; }
.plate.arrow { margin-right: -2px; }
.r { width: 17px; height: 17px; display: grid; place-items: center; background: #c6c6c2; border: 1px solid; border-color: var(--hi) #666 #666 var(--hi); }
.r svg { width: 13px; height: 13px; }
.run { display: flex; }
.push { height: 16px; background: var(--face); border: 1px solid; border-color: var(--hi) #5a5a5a #5a5a5a var(--hi); box-shadow: inset -1px -1px #9a9a9a; text-align: center; white-space: nowrap; line-height: 13px; }
.push:disabled { color: #8d8d8d; text-shadow: 1px 1px #e8e8e8; }
.w34 { width: 34px; }
.w64 { width: 64px; }
.w78 { width: 78px; }
.ribbon { height: 21px; flex: none; padding: 5px 0 0 131px; line-height: 12px; }

.work { flex: 1; display: flex; position: relative; min-height: 0; }
.rail { flex: none; display: flex; flex-direction: column; padding-top: 9px; position: relative; }
.rail.left { width: 30px; padding-left: 2px; }
.rail.right { width: 22px; padding: 8px 3px 0; border-left: 1px solid #999; }
.rail::before, .rail2::before { content: ""; position: absolute; top: 3px; left: 2px; right: 2px; height: 2px; border-top: 1px solid var(--hi); border-bottom: 1px solid #888; }
.vg { display: flex; flex-direction: column; }
.vg + .vg { border-top: 1px solid #888; box-shadow: inset 0 1px #eee; margin-top: 2px; padding-top: 4px; }
.left .g5 { height: 77px; }
.left .vg + .g5 { height: 81px; }
.left .g4 { height: 65px; }
.left .g2 { height: 36px; }
.left .vg { width: 24px; }
.g9 { height: 140px; }
.rail2 { position: relative; margin: 16px -3px 0; padding: 8px 3px 2px; border-top: 1px solid #888; border-bottom: 1px solid #888; }
.g9b { height: 139px; }
.right .g2 { height: 35px; }
.right .g1 { height: 20px; }
.v { flex: 1; min-height: 0; display: flex; align-items: center; justify-content: center; width: 15px; position: relative; }
.v svg { width: 13px; height: 13px; flex: none; }
.more::after { content: ""; position: absolute; right: -6px; border: 2px solid transparent; border-top-color: #222; border-bottom: 0; }

.manager { width: 210px; flex: none; display: flex; flex-direction: column; padding: 0 4px 4px 3px; border: 1px solid; border-color: #888 #444 #555 #eee; border-width: 0 1px 1px; margin-bottom: 19px; }
.tree { flex: 1; background: var(--paper); border-left: 1px solid #555; }
.sb { display: flex; height: 13px; background: #e2e2e2; border: 1px solid #555; border-width: 0 0 1px 1px; }
.sbb { width: 12px; flex: none; display: grid; place-items: center; background: var(--face); border: 1px solid; border-color: var(--hi) #555 #555 var(--hi); }
.sbb::after { content: ""; border: 3px solid transparent; }
.sbb.l::after { border-right-color: #111; border-left: 0; }
.sbb.rt::after { border-left-color: #111; border-right: 0; }
.sbb.up::after { border-bottom-color: #777; border-top: 0; }
.sbb.dn::after { border-top-color: #777; border-bottom: 0; }
.thumb { width: 71%; background: var(--face); border: 1px solid; border-color: var(--hi) #555 #555 var(--hi); }
.sb .rt { margin-left: auto; }

.view { flex: 1; min-width: 0; background: var(--paper); border-top: 1px solid #333; border-left: 1px solid #555; border-bottom: 1px solid var(--hi); }
.view svg { display: block; width: 100%; height: 100%; }
.gt { font: bold 9px "DejaVu Sans Condensed", "DejaVu Sans", sans-serif; }
.gs { font: 600 9px "Noto Sans", "DejaVu Sans", sans-serif; }

.dialog { position: absolute; left: 29px; top: 0; width: 54%; min-width: 487px; height: 388px; background: var(--face); border: 1px solid; border-color: #e0e0e0 #333 #333 #f0f0f0; border-right-width: 2px; padding: 1px 1px 0 1px; display: flex; flex-direction: column; }
.dtitle { display: flex; align-items: center; height: 13px; padding: 0 1px 0 1px; background: linear-gradient(90deg, #10286a, #2c4d8e 35%, #5f88ba 65%, #8fb2cf); color: #fff; }
.dtitle h2 { flex: 1; font: bold 8px/13px "DejaVu Sans Condensed", "DejaVu Sans", sans-serif; }
.tabs { display: flex; align-items: flex-end; height: 19px; padding-left: 4px; }
.tab { height: 13px; padding: 0 2px; border: 1px solid; border-color: #e8e8e8 #444 transparent #e8e8e8; border-bottom: 0; white-space: nowrap; line-height: 12px; }
.tab.on { height: 15px; line-height: 13px; padding: 0 2px 0 3px; position: relative; background: var(--face); }
.page { margin: 0 4px; border: 1px solid; border-color: #e8e8e8 #555 #555 #e8e8e8; border-right-width: 2px; border-bottom-width: 2px; flex: 1; padding: 8px 4px 0 7px; display: flex; flex-direction: column; }
.cols { display: grid; grid-template-columns: 1fr 244px; column-gap: 5px; height: 273px; border-bottom: 1px solid #999; box-shadow: 0 1px #e6e6e6; }
.list { height: 225px; background: var(--paper); border: 1px solid; border-color: #444 #eee #eee #444; border-width: 2px 1px 1px 1px; display: flex; flex-direction: column; overflow: hidden; }
.list .sb { margin-top: auto; border-left: 0; }
table { width: 100%; table-layout: fixed; border-collapse: separate; border-spacing: 0; }
.c1 { width: 53px; } .c2 { width: 45px; } .c3 { width: 22px; } .c4 { width: 37px; } .c5 { width: 31px; }
th, td { padding: 0 0 0 3px; font-weight: normal; text-align: left; height: 12px; line-height: 11px; white-space: nowrap; }
th { background: var(--face); border-right: 1px solid #555; border-bottom: 1px solid #666; }
th:last-child { border-right: 0; padding-left: 2px; }
td { background: #d2d2d2; }
th:nth-child(2), td:nth-child(2) { padding-left: 5px; }
td:nth-child(2) { padding-left: 7px; }
td:first-child { padding-left: 3px; background: linear-gradient(90deg, #fafafa 13px, #d2d2d2 13px); }
.tooln { display: flex; align-items: center; gap: 7px; }
.tooln svg { width: 6px; height: 10px; }
.hint { text-align: right; padding: 8px 4px 0 0; }
.lib { display: grid; grid-template-columns: 1fr 10px 64px; column-gap: 4px; align-items: center; padding: 6px 10px 0 0; }
.rcol { display: flex; flex-direction: column; }
.fields { display: grid; grid-template-columns: 83px 42px 77px 42px; row-gap: 4px; padding-bottom: 4px; border-bottom: 1px solid #999; box-shadow: 0 1px #e6e6e6; }
.fields > label { text-align: right; padding: 3px 3px 0 0; white-space: nowrap; }
.fields input:not([type]) { width: 100%; height: 16px; background: var(--yel); border: 1px solid; border-color: #555 #eee #eee #555; border-width: 2px 1px 1px 2px; padding: 0 0 2px 0; }
.fields input.white:not([type]) { grid-column: span 3; background: var(--paper); padding-left: 3px; }
.mid { padding: 5px 0 19px; }
.low { padding: 5px 0 4px; }
.low .cool { grid-column: 1 / 3; justify-self: end; width: 70px; margin-bottom: 1px; }
.cw { margin-top: 3px; height: 14px; }
.checks { grid-column: 1 / -1; display: grid; grid-template-columns: 120px 1fr; padding: 1px 0 0 40px; }
.ck { display: flex; align-items: center; gap: 4px; height: 12px; white-space: nowrap; }
input[type=checkbox] { appearance: none; width: 9px; height: 9px; background: var(--paper); border: 1px solid; border-color: #555 #eee #eee #555; flex: none; display: grid; place-items: center; }
input[type=checkbox]:checked::after { content: ""; width: 3px; height: 5px; border: solid #111; border-width: 0 2px 2px 0; rotate: 40deg; translate: 0 -1px; }
.comment { margin-top: auto; padding: 0 0 6px 4px; }
.ta { display: flex; height: 41px; margin-top: 2px; background: var(--paper); border: 1px solid; border-color: #444 #eee #eee #444; border-width: 1px; }
.ta textarea { flex: 1; resize: none; display: block; }
.vsb { display: flex; flex-direction: column; justify-content: space-between; background: #e2e2e2; }
.vsb .sbb { height: 11px; }
.foot { display: grid; grid-template-columns: 1fr 64px 76px 76px 76px; gap: 4px 10px; padding-top: 3px; }
.opt { display: flex; align-items: center; justify-content: space-between; }
.opt .push { width: 63px; }
.opt.end { justify-content: flex-end; }
.foot > .ck { height: 16px; }
.actions { display: flex; justify-content: flex-end; gap: 4px; padding: 5px 7px 2px 0; }
.big { width: 37px; height: 20px; display: grid; place-items: center; }
.big svg { width: 15px; height: 15px; }
.halo { position: absolute; left: 322px; top: 155px; width: 44px; height: 44px; border-radius: 50%; background: #fff83e; mix-blend-mode: multiply; opacity: .85; pointer-events: none; }
.caret { position: absolute; left: 342px; top: 173px; width: 6px; height: 10px; pointer-events: none; }

.status { display: flex; flex: none; height: 18px; padding-top: 2px; gap: 3px; justify-content: flex-end; font: 8px/13px "DejaVu Sans Condensed", "DejaVu Sans", sans-serif; color: #333; border-top: 1px solid var(--hi); }
.cell { flex: none; height: 15px; border: 1px solid; border-color: #888 #eee #eee #888; text-align: center; white-space: nowrap; }
.w16 { width: 16px; } .w32 { width: 32px; } .w26 { width: 26px; } .w41 { width: 41px; } .w38 { width: 38px; } .w9 { width: 9px; } .w7 { width: 7px; }
.status .combo { flex: none; height: 15px; }
.zc, .lv { display: flex; gap: 2px; justify-content: space-between; }
.zc .combo, .lv .combo { height: 13px; }
.zc .combo { width: 58px; } .lv .combo { width: 69px; }
.zc { width: 68px; } .lv { width: 93px; }
.colr { width: 33px; display: flex; align-items: center; justify-content: space-between; padding: 0 3px 0 0; }
.colr b { width: 20px; background: #f01414; color: #7a0c0c; font-weight: normal; line-height: 11px; }
.tri { border: 3px solid transparent; border-top: 5px solid #111; border-bottom: 0; }
.s22 { width: 22px; } .s42 { width: 42px; } .s46 { width: 46px; }
.s42 select, .s46 select { flex: 0 0 0; width: 0; }
.combo > svg { flex: 1; min-width: 0; height: 10px; }
```
